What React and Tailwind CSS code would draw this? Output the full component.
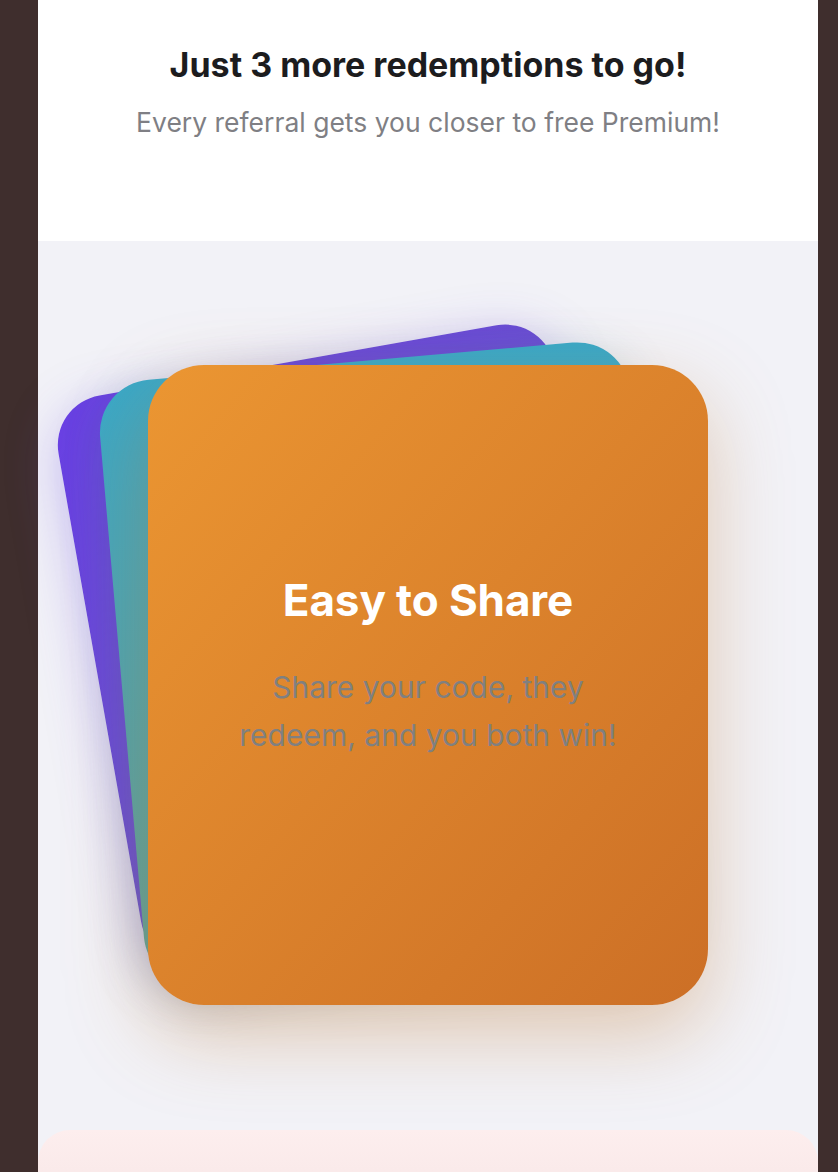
import React from 'react';

const cards = [
  {
    key: 'purple',
    cls: 'absolute inset-0 rounded-[56px] bg-gradient-to-br from-[#6a40e4] to-[#6b58c6] -translate-x-[80px] -translate-y-[41px] -rotate-10 scale-90 shadow-[0_16px_60px_rgba(104,72,232,0.35)]',
  },
  {
    key: 'teal',
    cls: 'absolute inset-0 rounded-[56px] bg-gradient-to-b from-[#39a8c8] to-[#5c9f96] -translate-x-[41px] -translate-y-[21px] -rotate-5 scale-95 shadow-[0_16px_50px_rgba(40,120,150,0.25)]',
  },
];

const App = () => {
  return (
    <div className="flex min-h-screen w-full bg-[#3f2e2d] font-['Inter','Noto_Sans',sans-serif]">
      <div className="ml-[38px] flex w-[780px] flex-col bg-[#f2f2f7]">
        <div className="flex h-[241px] flex-col items-center bg-white pt-[43px]">
          <h1 className="m-0 text-[34px] font-bold leading-[44px] tracking-[0px] text-[#1c1c1e]">
            Just 3 more redemptions to go!
          </h1>
          <p className="m-0 mt-[18px] text-[26.5px] leading-[34px] text-[#7f7f84]">
            Every referral gets you closer to free Premium!
          </p>
        </div>

        <div className="flex justify-center pt-[124px] pb-[125px]">
          <div className="relative h-[640px] w-[560px]">
            {cards.map((c) => (
              <div key={c.key} className={c.cls} />
            ))}
            <div className="absolute inset-0 flex flex-col items-center justify-center rounded-[56px] bg-gradient-to-br from-[#eb9632] to-[#cc6f26] pb-[37px] shadow-[0_30px_80px_rgba(190,120,50,0.35)]">
              <h2 className="m-0 text-[44px] font-bold leading-[52px] tracking-[-0.1px] text-white">
                Easy to Share
              </h2>
              <p className="m-0 mt-[37px] max-w-[420px] text-center text-[30px] leading-[48px] text-[#808080]">
                Share your code, they redeem, and you both win!
              </p>
            </div>
          </div>
        </div>

        <div className="h-[80px] rounded-t-[32px] bg-gradient-to-b from-[#fdeeee] to-[#f7e6e6]" />
      </div>
    </div>
  );
};

export default App;
